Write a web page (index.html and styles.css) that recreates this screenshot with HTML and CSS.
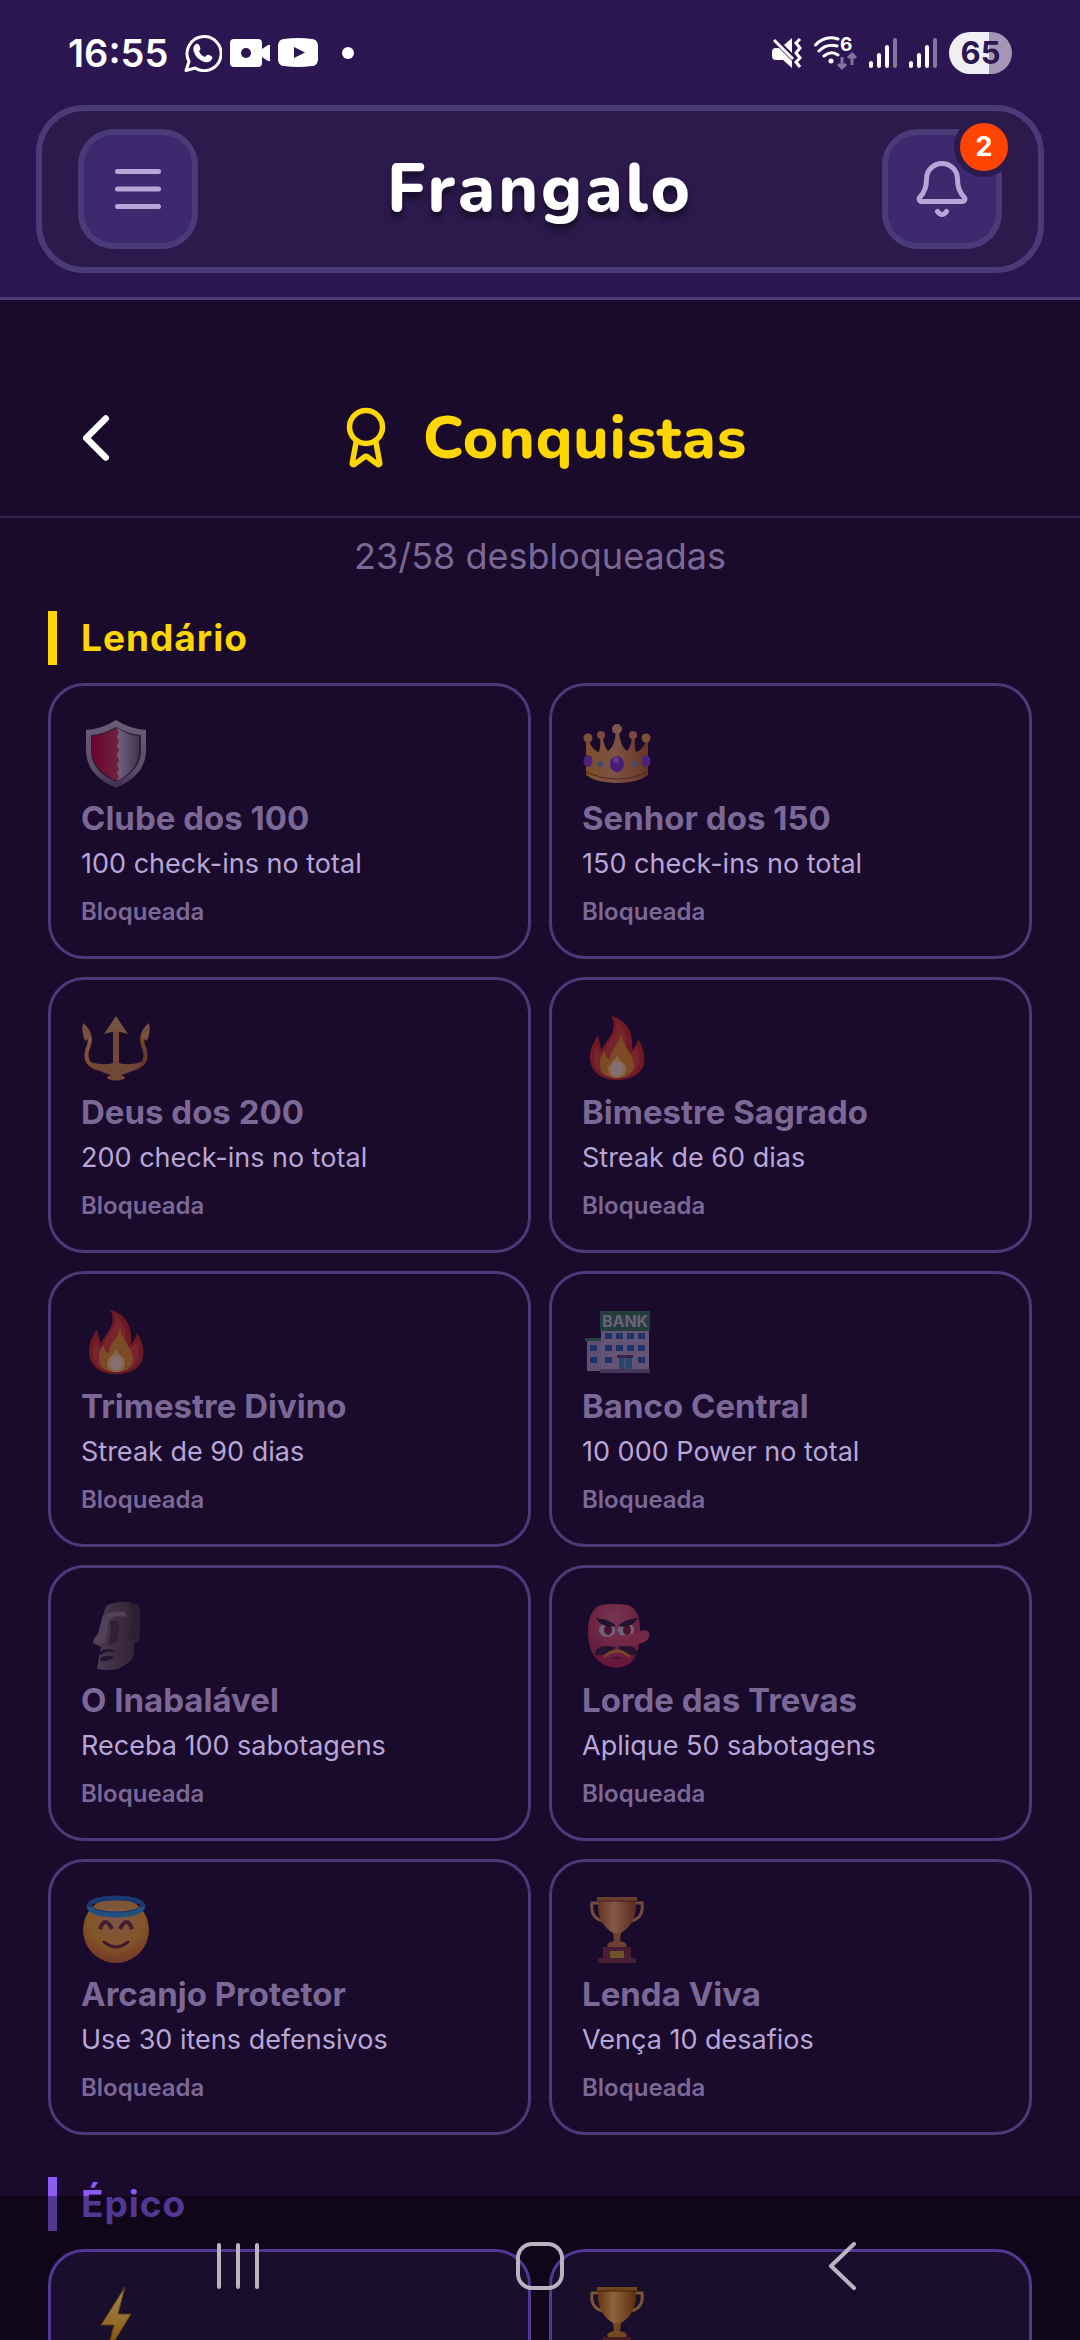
FILE: index.html
```html
<!DOCTYPE html>
<html lang="pt-BR">
  <head>
    <meta charset="utf-8" />
    <meta name="viewport" content="width=device-width, initial-scale=1" />
    <title>Frangalo</title>
    <link rel="stylesheet" href="styles.css">
  </head>
  <body>
    <svg class="defs" width="0" height="0" aria-hidden="true">
      <defs>
        <linearGradient id="gold" x1="0" y1="0" x2="1" y2="1">
          <stop offset="0" stop-color="#e8b070" />
          <stop offset="0.5" stop-color="#dc8c2c" />
          <stop offset="1" stop-color="#a8542c" />
        </linearGradient>
        <linearGradient id="crown" x1="0" y1="0" x2="1" y2="0">
          <stop offset="0" stop-color="#e09020" />
          <stop offset="0.45" stop-color="#dc9c60" />
          <stop offset="1" stop-color="#b8601c" />
        </linearGradient>
        <linearGradient id="bronze" x1="0" y1="0" x2="1" y2="0">
          <stop offset="0" stop-color="#a85a22" />
          <stop offset="0.4" stop-color="#eca860" />
          <stop offset="1" stop-color="#9c4c1c" />
        </linearGradient>
        <linearGradient id="steel" x1="0" y1="0" x2="0" y2="1">
          <stop offset="0" stop-color="#b8aec0" />
          <stop offset="0.75" stop-color="#9a90a4" />
          <stop offset="1" stop-color="#5c4e68" />
        </linearGradient>
        <linearGradient id="silver" x1="0" y1="0" x2="1" y2="0">
          <stop offset="0" stop-color="#c8bed0" />
          <stop offset="1" stop-color="#6c6078" />
        </linearGradient>
        <linearGradient id="red" x1="0" y1="0" x2="1" y2="0">
          <stop offset="0" stop-color="#b80032" />
          <stop offset="1" stop-color="#c83c50" />
        </linearGradient>
        <linearGradient id="stone" x1="0" y1="0" x2="1" y2="0">
          <stop offset="0" stop-color="#84727c" />
          <stop offset="0.5" stop-color="#625058" />
          <stop offset="1" stop-color="#48343c" />
        </linearGradient>
        <radialGradient id="face" cx="0.5" cy="0.3" r="0.75">
          <stop offset="0" stop-color="#e0a468" />
          <stop offset="0.6" stop-color="#ec9e24" />
          <stop offset="1" stop-color="#c45a28" />
        </radialGradient>
        <radialGradient id="mask" cx="0.5" cy="0.25" r="0.8">
          <stop offset="0" stop-color="#d06478" />
          <stop offset="1" stop-color="#b01c44" />
        </radialGradient>
        <linearGradient id="bolt" x1="0" y1="0" x2="0" y2="1">
          <stop offset="0" stop-color="#ffe68c" />
          <stop offset="0.6" stop-color="#f5ac3c" />
          <stop offset="1" stop-color="#d07018" />
        </linearGradient>
      </defs>

      <symbol id="flame" viewBox="0 0 70 70">
        <path d="M29 3C43 6 52 18 50 37C54 33 55 30 56 26C61 34 63 41 62 49C61 60 50 67 35 67C19 67 8 59 8 44C8 35 12 29 16 22C17 28 18 32 20 37C22 29 38 18 29 3Z" fill="#c42820" />
        <path d="M34 8C45 16 46 28 44 39C49 42 54 39 55 35C62 54 51 65 35 65C19 65 11 56 12 44C12 40 13 36 15 33C16 40 20 43 23 41C23 28 38 22 34 8Z" fill="#d84c38" opacity="0.7" />
        <path d="M39 20C41 34 52 42 52 52C52 61 44 65 35 65C25 65 18 60 18 52C18 45 20 40 23 38C23 43 25 46 28 46C28 36 38 32 39 20Z" fill="#de8c20" />
        <path d="M35 41C36 48 45 50 44 57C43 63 39 65 35 65C29 65 26 61 26 56C26 50 34 48 35 41Z" fill="#f0c468" />
        <ellipse cx="35" cy="56" rx="6" ry="7" fill="#f0d4b8" />
      </symbol>

      <symbol id="trophy" viewBox="0 0 70 70">
        <path d="M17 8H10Q8 22 20 26M53 8H60Q62 22 50 26" fill="none" stroke="#cc8c58" stroke-width="3" />
        <path d="M16 3H54V12C54 25 46 34 39 38H31C24 34 16 25 16 12Z" fill="url(#bronze)" />
        <path d="M15 2H55V6H15Z" fill="#b87430" />
        <path d="M16 6H54" stroke="#70340e" stroke-width="1" />
        <path d="M31 38H39L38 46C43 47 46 49 44 52H26C24 49 27 47 32 46Z" fill="#c07838" />
        <path d="M21 52H49V63H54V68H16V63H21Z" fill="#74303c" />
        <path d="M28 56H42V63H28Z" fill="#c89824" />
      </symbol>
    </svg>

    <div class="app">
      <header class="topbar">
        <div class="status-bar">
          <div class="status-left">
            <span class="clock">16:55</span>
            <svg width="38" height="38" viewBox="0 0 38 38" aria-hidden="true">
              <path d="M2 36.500l3-9A17 17 0 1 1 11 34Z" fill="none" stroke="#fff" stroke-width="3" stroke-linejoin="round" />
              <path d="M12 10c2-1 3 0 4 3 1 2 0 3-1 4 1 3 3 5 6 6 1-1 2-3 4-2 3 1 4 2 3 4-2 4-6 4-10 2-4-2-7-5-8-9-1-3-1-6 2-8Z" fill="#fff" />
            </svg>
            <svg width="40" height="28" viewBox="0 0 40 28" aria-hidden="true">
              <path d="M4 0H28Q32 0 32 4V10L38 6H40V22H38L32 18V24Q32 28 28 28H4Q0 28 0 24V4Q0 0 4 0Z" fill="#fff" />
              <circle cx="16" cy="14" r="5" fill="#2c1652" />
            </svg>
            <svg width="40" height="29" viewBox="0 0 40 29" aria-hidden="true">
              <path d="M6 1Q20-1 34 1Q39 1 40 7Q41 15 40 22Q39 28 34 28Q20 30 6 28Q1 28 0 22Q-1 15 0 7Q1 1 6 1Z" fill="#fff" />
              <path d="M16 9L27 14.500L16 20Z" fill="#2c1652" />
            </svg>
            <span class="dot"></span>
          </div>
          <div class="status-right">
            <svg width="30" height="30" viewBox="0 0 30 30" aria-hidden="true">
              <path d="M12 7L20 0V15ZM4 10H7L20 23V30L11 22H4Q0 22 0 18V14Q0 10 4 10Z" fill="#fff" />
              <path d="M2 2L21 21" stroke="#fff" stroke-width="3" />
              <path d="M28 1L24 5L28 10L24 15L28 20L24 24L28 29" fill="none" stroke="#fff" stroke-width="3" />
            </svg>
            <svg width="43" height="44" viewBox="0 -5 43 44" aria-hidden="true">
              <path d="M1.500 9Q11-1 24 3M5 15Q13 7 23 10M10 20Q17 14 24 19" fill="none" stroke="#fff" stroke-width="3" stroke-linecap="round" />
              <circle cx="17" cy="25" r="2.500" fill="#fff" />
              <text x="26" y="15" class="wifi-six">6</text>
              <path d="M28 21V32M24 28L28 32L32 28M38 29V18M34 22L38 18L42 22" fill="none" stroke="#8574a0" stroke-width="3" />
            </svg>
            <svg width="28" height="30" viewBox="0 0 28 30" aria-hidden="true">
              <path d="M2 25V28M10 17V28M18 9V28" stroke="#fff" stroke-width="4" stroke-linecap="round" />
              <path d="M26 2V28" stroke="#8574a0" stroke-width="4" stroke-linecap="round" />
            </svg>
            <svg width="28" height="30" viewBox="0 0 28 30" aria-hidden="true">
              <path d="M2 25V28M10 17V28M18 9V28" stroke="#fff" stroke-width="4" stroke-linecap="round" />
              <path d="M26 2V28" stroke="#8574a0" stroke-width="4" stroke-linecap="round" />
            </svg>
            <span class="battery">65</span>
          </div>
        </div>

        <div class="brand-bar">
          <button class="icon-button" aria-label="Menu">
            <svg width="72" height="72" viewBox="0 0 72 72">
              <path d="M15.500 18.500H56.500M15.500 36H56.500M15.500 53.500H56.500" />
            </svg>
          </button>
          <div class="brand">Frangalo</div>
          <button class="icon-button" aria-label="Notificações">
            <svg width="72" height="72" viewBox="0 0 72 72">
              <path d="M16 48.500H56A2.600 2.600 0 0 0 58 44C53 39 51.500 34 51.500 26A15.500 15.500 0 0 0 20.500 26C20.500 34 19 39 14 44A2.600 2.600 0 0 0 16 48.500ZM31.500 58.500Q36 64.500 40.500 58.500" />
            </svg>
            <span class="badge">2</span>
          </button>
        </div>
      </header>

      <div class="page-header">
        <button class="back" aria-label="Voltar">
          <svg width="78" height="78" viewBox="0 0 24 24">
            <path d="M15 18L9 12L15 6" />
          </svg>
        </button>
        <h1 class="page-title">
          <svg width="66" height="66" viewBox="0 0 24 24" aria-hidden="true">
            <circle cx="12" cy="8" r="6" />
            <path d="M15.477 12.890L17 21.100a.5.5 0 0 1-.8.500l-3.600-2.700a1 1 0 0 0-1.200 0L7.800 21.600A.5.5 0 0 1 7 21.100L8.520 12.890" />
          </svg>
          Conquistas
        </h1>
      </div>

      <main class="content">
        <p class="summary">23/58 desbloqueadas</p>

        <section class="tier">
          <h2 class="tier-title legendary">Lendário</h2>
          <div class="grid">
            <article class="card">
              <svg class="emoji" viewBox="0 0 70 70">
                <path d="M35 1Q49 10 65 11V31C65 51 51 62 35 69C19 62 5 51 5 31V11Q21 10 35 1Z" fill="url(#steel)" />
                <path d="M35 8Q47 15 60 16V32C60 47 49 57 35 63C21 57 10 47 10 32V16Q23 15 35 8Z" fill="#3c3048" />
                <path d="M36 9Q47 16 58 17V32C58 46 48 56 36 62Z" fill="url(#silver)" />
                <path d="M36 9Q23 16 11 17V32C11 46 22 56 36 62L38 58L36 54L38 50L36 46L38 41L36 36L38 31L36 27L38 22L36 18L38 13Z" fill="url(#red)" />
              </svg>
              <h3>Clube dos 100</h3>
              <p class="desc">100 check-ins no total</p>
              <p class="state">Bloqueada</p>
            </article>
            <article class="card">
              <svg class="emoji" viewBox="0 0 70 70">
                <path d="M4 20L7 22Q10 31 17 33Q19 28 18 18H21Q22 28 26 32Q33 28 34 12H37Q38 28 45 32Q49 28 50 18H53Q52 28 54 33Q61 31 64 22L66 20V56Q56 64 35 64Q14 64 4 56Z" fill="url(#crown)" />
                <path d="M4 53Q20 60 35 60Q50 60 66 53" fill="none" stroke="#8c4424" stroke-width="1" />
                <circle cx="35" cy="10" r="5" fill="#e0a464" />
                <circle cx="6" cy="19" r="4.500" fill="#dc9844" />
                <circle cx="64" cy="19" r="4.500" fill="#dc9844" />
                <circle cx="19" cy="16" r="4" fill="#d88854" />
                <circle cx="51" cy="16" r="4" fill="#d88854" />
                <ellipse cx="35" cy="45" rx="7" ry="8" fill="#7c2cc4" />
                <ellipse cx="34" cy="41" rx="3" ry="3" fill="#ac6cdc" />
                <ellipse cx="6" cy="42" rx="4.500" ry="6" fill="#7c3ccc" />
                <ellipse cx="64" cy="42" rx="4.500" ry="6" fill="#7c3ccc" />
                <circle cx="18" cy="45" r="3" fill="#6c90a8" />
                <circle cx="52" cy="45" r="3" fill="#6c90a8" />
              </svg>
              <h3>Senhor dos 150</h3>
              <p class="desc">150 check-ins no total</p>
              <p class="state">Bloqueada</p>
            </article>
            <article class="card">
              <svg class="emoji" viewBox="0 0 70 70">
                <path d="M4 17Q11 22 8 32Q1 48 13 54Q24 58 35 58Q46 58 57 54Q69 48 62 32Q59 22 66 17" fill="none" stroke="url(#gold)" stroke-width="4" />
                <path d="M32 14H38V60H32Z" fill="#c88440" />
                <path d="M35 3L47 21L35 18L23 21ZM2 10Q10 16 10 24L4 28Q0 18 2 10ZM68 10Q60 16 60 24L66 28Q70 18 68 10Z" fill="#d09858" />
                <path d="M9 49Q28 54 35 48Q42 54 61 49Q56 58 40 62Q46 64 43 66Q35 69 27 66Q24 64 30 62Q14 58 9 49Z" fill="#c88444" />
              </svg>
              <h3>Deus dos 200</h3>
              <p class="desc">200 check-ins no total</p>
              <p class="state">Bloqueada</p>
            </article>
            <article class="card">
              <svg class="emoji"><use href="#flame" /></svg>
              <h3>Bimestre Sagrado</h3>
              <p class="desc">Streak de 60 dias</p>
              <p class="state">Bloqueada</p>
            </article>
            <article class="card">
              <svg class="emoji"><use href="#flame" /></svg>
              <h3>Trimestre Divino</h3>
              <p class="desc">Streak de 90 dias</p>
              <p class="state">Bloqueada</p>
            </article>
            <article class="card">
              <svg class="emoji" viewBox="0 0 70 70">
                <path d="M5 32H20V64H5Z" fill="#a494b4" />
                <path d="M3 31H19V34H3Z" fill="#2c7c58" />
                <path d="M19 22H67V63H68V66H18V63H19Z" fill="#ac9cbc" />
                <path d="M18 62H68V66H18Z" fill="#74648c" />
                <path d="M18 4H68V24H18Z" fill="#2c7050" />
                <text x="43" y="20" class="bank-sign">BANK</text>
                <path d="M23 26h7v6h-7zM34 26h7v6h-7zM45 26h7v6h-7zM56 26h7v6h-7zM23 38h7v6h-7zM34 38h7v6h-7zM45 38h7v6h-7zM56 38h7v6h-7zM23 50h7v6h-7zM56 50h7v6h-7zM8 38h7v6h-7zM8 50h7v6h-7z" fill="#205ca8" />
                <path d="M35 48H51V51H35Z" fill="#503c68" />
                <path d="M37 51H50V62H37Z" fill="#3884ac" />
                <path d="M43 51V62" stroke="#98a4c4" />
              </svg>
              <h3>Banco Central</h3>
              <p class="desc">10 000 Power no total</p>
              <p class="state">Bloqueada</p>
            </article>
            <article class="card">
              <svg class="emoji" viewBox="0 0 70 70">
                <path d="M25 5Q35 0 47 1L58 4Q60 20 58 40L53 42Q54 56 49 61L37 68Q27 70 16 68L18 56L20 46L12 42Q12 37 17 33L21 17Z" fill="url(#stone)" />
                <path d="M47 1L58 4Q60 20 58 40L47 38L52 12Z" fill="#46323c" />
                <path d="M22 15Q32 9 44 11L46 16Q35 13 28 19L24 40Q20 44 13 42Q19 30 22 15Z" fill="#8c7a84" />
                <path d="M29 20Q42 16 36 40L27 45Q31 31 29 20Z" fill="#463440" />
                <path d="M18 51Q27 45 35 51Q25 50 19 54ZM19 57Q27 53 33 56Q27 61 20 60Z" fill="#2c1c2c" />
              </svg>
              <h3>O Inabalável</h3>
              <p class="desc">Receba 100 sabotagens</p>
              <p class="state">Bloqueada</p>
            </article>
            <article class="card">
              <svg class="emoji" viewBox="0 0 70 70">
                <path d="M19 4Q32 2 46 4Q57 8 58 25Q60 66 34 67Q5 64 6 28Q7 8 19 4Z" fill="url(#mask)" />
                <ellipse cx="25" cy="29" rx="8" ry="7" fill="#c4bccc" />
                <ellipse cx="44" cy="29" rx="8" ry="7" fill="#c4bccc" />
                <ellipse cx="26" cy="29" rx="4" ry="5" fill="#781c30" />
                <ellipse cx="45" cy="29" rx="4" ry="5" fill="#781c30" />
                <path d="M14 17Q27 18 34 25Q20 28 14 17ZM56 17Q43 18 36 25Q50 28 56 17Z" fill="#241c38" />
                <path d="M33 36L54 32Q62 27 67 31Q69 39 60 42Q42 48 34 42Z" fill="#c84860" />
                <path d="M13 54Q13 42 34 46Q26 56 13 54ZM56 54Q55 42 36 46Q43 56 56 54Z" fill="#2c1c34" />
                <path d="M22 56Q35 44 48 56" fill="none" stroke="#d48024" stroke-width="3" />
                <path d="M28 58Q35 53 42 58Z" fill="#802038" />
              </svg>
              <h3>Lorde das Trevas</h3>
              <p class="desc">Aplique 50 sabotagens</p>
              <p class="state">Bloqueada</p>
            </article>
            <article class="card">
              <svg class="emoji" viewBox="0 0 70 70">
                <circle cx="35" cy="35" r="33" fill="url(#face)" />
                <ellipse cx="35" cy="11" rx="27" ry="8" fill="none" stroke="#1c68b4" stroke-width="5" />
                <path d="M8 12Q12 20 35 20Q58 20 62 12" fill="none" stroke="#2894d0" stroke-width="5" />
                <path d="M19 34Q24 20 31 34M39 34Q46 20 51 34" fill="none" stroke="#6c2c34" stroke-width="4" />
                <path d="M23 47Q35 57 47 47" fill="none" stroke="#6c2c34" stroke-width="3" stroke-linecap="round" />
              </svg>
              <h3>Arcanjo Protetor</h3>
              <p class="desc">Use 30 itens defensivos</p>
              <p class="state">Bloqueada</p>
            </article>
            <article class="card">
              <svg class="emoji"><use href="#trophy" /></svg>
              <h3>Lenda Viva</h3>
              <p class="desc">Vença 10 desafios</p>
              <p class="state">Bloqueada</p>
            </article>
          </div>
        </section>

        <section class="tier">
          <h2 class="tier-title epic">Épico</h2>
          <div class="grid">
            <article class="card unlocked">
              <svg class="emoji" viewBox="0 0 70 70">
                <path d="M44 2L20 40H33L26 68L50 29H37Z" fill="url(#bolt)" stroke="#a86418" stroke-width="1" />
              </svg>
            </article>
            <article class="card unlocked">
              <svg class="emoji"><use href="#trophy" /></svg>
            </article>
          </div>
        </section>
      </main>

      <nav class="system-nav">
        <button aria-label="Recentes">
          <svg width="48" height="48" viewBox="0 0 48 48">
            <path d="M5 3V45M24 3V45M43 3V45" />
          </svg>
        </button>
        <button aria-label="Início">
          <svg width="48" height="48" viewBox="0 0 48 48">
            <rect x="2" y="2" width="44" height="44" rx="14" />
          </svg>
        </button>
        <button aria-label="Voltar">
          <svg width="48" height="48" viewBox="0 0 48 48">
            <path d="M36 2L13 24L36 46" />
          </svg>
        </button>
      </nav>
    </div>
  </body>
</html>
```

FILE: styles.css
```css
* {
  box-sizing: border-box;
}

body,
h1,
h2,
h3,
p {
  margin: 0;
}

body {
  background-color: #1a0a2b;
  color: #fff;
  font-family: Inter, Roboto, sans-serif;
}

button {
  padding: 0;
  border: 0;
  background: none;
  color: inherit;
  font: inherit;
}

svg {
  display: block;
  flex: none;
}

.defs {
  position: absolute;
}

.app {
  position: relative;
  height: 100vh;
  overflow: hidden;
}

/* header */
.topbar {
  padding: 0 36px 24px;
  background-color: #2c1652;
  border-bottom: 3px solid #4a3a78;
}

.status-bar {
  display: flex;
  justify-content: space-between;
  height: 105px;
  padding: 0 32px;
}

.status-left,
.status-right {
  display: flex;
  align-items: center;
}

.status-left {
  gap: 8px;
}

.status-right {
  gap: 12px;
}

.clock {
  margin-right: 8px;
  font-size: 38px;
  font-weight: 600;
}

.dot {
  width: 12px;
  height: 12px;
  margin-left: 16px;
  border-radius: 50%;
  background-color: #fff;
}

.wifi-six {
  fill: #fff;
  font-size: 19px;
  font-weight: 700;
}

.battery {
  width: 63px;
  height: 42px;
  border-radius: 21px;
  background: linear-gradient(to right, #f0eef5 64%, #a497b5 64%);
  color: #2c1652;
  font-size: 31px;
  font-weight: 700;
  line-height: 42px;
  text-align: center;
}

.brand-bar {
  display: flex;
  align-items: center;
  justify-content: space-between;
  height: 168px;
  padding: 0 36px;
  border: 6px solid #4a3a78;
  border-radius: 48px;
  background-color: #2c1a4d;
}

.brand {
  font-family: Nunito, "Open Sans", sans-serif;
  font-size: 67px;
  font-weight: 800;
  letter-spacing: 3px;
  text-shadow: 0 6px 6px rgba(0, 0, 0, 0.5);
}

.icon-button {
  position: relative;
  display: flex;
  align-items: center;
  justify-content: center;
  width: 120px;
  height: 120px;
  border: 6px solid #4a3a78;
  border-radius: 36px;
  background-color: #3d2a6e;
}

.icon-button svg {
  fill: none;
  stroke: #b8a6d9;
  stroke-width: 5;
  stroke-linecap: round;
  stroke-linejoin: round;
}

.badge {
  position: absolute;
  top: -18px;
  right: -18px;
  width: 60px;
  height: 60px;
  border: 6px solid #2c1a4d;
  border-radius: 50%;
  background-color: #ff4500;
  font-size: 27px;
  font-weight: 700;
  line-height: 48px;
  text-align: center;
}

/* page title */
.page-header {
  display: grid;
  grid-template-columns: 78px 1fr 78px;
  align-items: center;
  padding: 96px 57px 36px;
  border-bottom: 2px solid #33214f;
}

.back svg {
  fill: none;
  stroke: #fff;
  stroke-width: 2;
  stroke-linecap: round;
  stroke-linejoin: round;
}

.page-title {
  display: flex;
  align-items: center;
  justify-content: center;
  gap: 24px;
  color: #ffd700;
  font-family: Nunito, "Open Sans", sans-serif;
  font-size: 60px;
  font-weight: 800;
  letter-spacing: 1px;
  line-height: 84px;
}

.page-title svg {
  fill: none;
  stroke: #ffd700;
  stroke-width: 2;
  stroke-linecap: round;
  stroke-linejoin: round;
}

/* achievements */
.content {
  padding: 16px 48px 0;
}

.summary {
  margin-bottom: 33px;
  color: #7b6896;
  font-size: 36px;
  line-height: 44px;
  text-align: center;
}

.tier {
  margin-bottom: 42px;
}

.tier-title {
  margin-bottom: 18px;
  padding-left: 24px;
  border-left: 9px solid;
  font-size: 37px;
  font-weight: 700;
  letter-spacing: 1px;
  line-height: 54px;
}

.legendary {
  color: #ffd700;
}

.epic {
  color: #8b5cf6;
}

.grid {
  display: grid;
  grid-template-columns: 1fr 1fr;
  gap: 18px;
}

.card {
  min-height: 276px;
  padding: 30px 30px 29px;
  border: 3px solid #4a3a78;
  border-radius: 36px;
}

.card.unlocked {
  border-color: #8b5cf6;
  background-color: #2b1a4b;
}

.emoji {
  width: 70px;
  height: 70px;
  margin: 3px 0 8px;
  opacity: 0.5;
}

.unlocked .emoji {
  opacity: 1;
}

.bank-sign {
  fill: #c0b8c8;
  font-size: 16px;
  font-weight: 700;
  text-anchor: middle;
}

.card h3 {
  margin-bottom: 7px;
  color: #7b6896;
  font-size: 33px;
  font-weight: 700;
  line-height: 42px;
}

.card .desc {
  margin-bottom: 15px;
  color: #b8a6d9;
  font-size: 27px;
  line-height: 36px;
}

.card .state {
  color: #7b6896;
  font-size: 24px;
  font-weight: 600;
  line-height: 30px;
}

/* system navigation */
.system-nav {
  position: absolute;
  left: 0;
  right: 0;
  bottom: 0;
  display: grid;
  grid-template-columns: 1fr 1fr 1fr;
  align-items: center;
  justify-items: center;
  height: 144px;
  padding: 0 87px 4px;
  background-color: rgba(0, 0, 0, 0.4);
}

.system-nav svg {
  fill: none;
  stroke: #bab4c1;
  stroke-width: 4;
  stroke-linecap: round;
  stroke-linejoin: round;
}
```
